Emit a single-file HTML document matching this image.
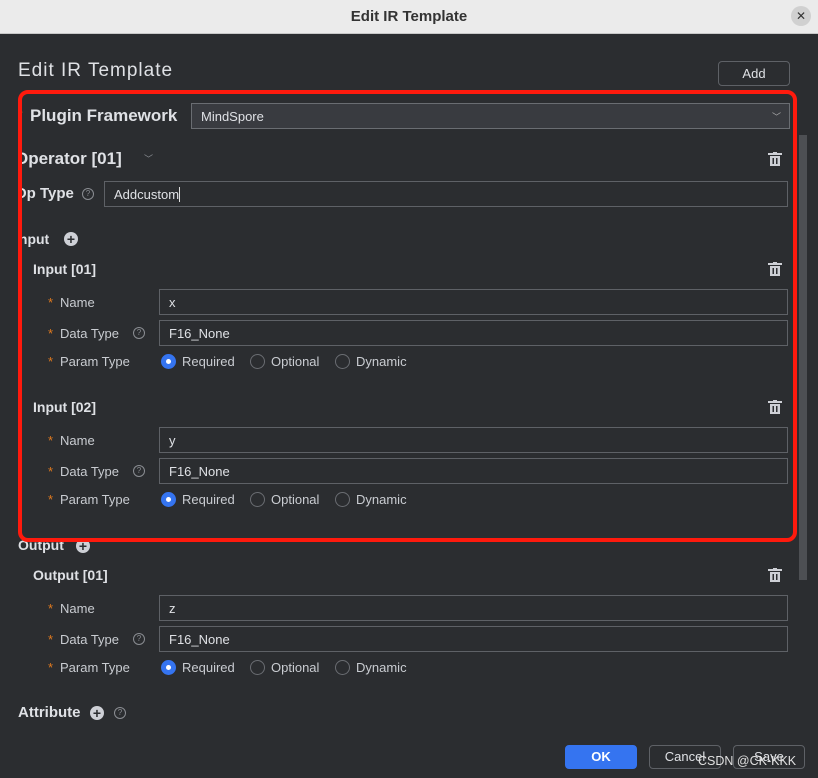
<!DOCTYPE html>
<html><head><style>
*{box-sizing:border-box;margin:0;padding:0}
body{width:818px;height:778px;background:#2b2d30;font-family:"Liberation Sans",sans-serif;color:#dfe1e5;position:relative;overflow:hidden}
.a{position:absolute;white-space:nowrap}
.tb{left:0;top:0;width:818px;height:34px;background:#ebebeb;border-bottom:1px solid #c8c8c8}
.box{position:absolute;border:1px solid #5e6166;background:#2b2d30;font-size:13px;padding-left:9px;display:flex;align-items:center;color:#dfe1e5}
.lbl{font-size:13px;color:#c9ccd1}
.st{color:#e07a1f;font-size:13px}
.h{font-weight:bold;font-size:14px}
.rad{position:absolute;width:15px;height:15px;border-radius:50%;border:1px solid #6a6d72}
.on{background:#3574f0;border-color:#3574f0}
.on::after{content:"";position:absolute;left:4px;top:4px;width:5px;height:5px;border-radius:50%;background:#fff}
.q{position:absolute;width:12px;height:12px;border:1px solid #8a8d92;border-radius:50%;font-size:8px;color:#8a8d92;text-align:center;line-height:10px}
.plus{position:absolute;width:14px;height:14px;border-radius:50%;background:#ced0d6;color:#2b2d30;font-size:14px;font-weight:bold;text-align:center;line-height:14px}
.btn{position:absolute;border:1px solid #5e6166;border-radius:4px;font-size:13px;text-align:center;color:#dfe1e5}
</style></head><body>
<div class="a tb"></div>
<div class="a" style="left:0;width:818px;top:8px;text-align:center;font-size:15px;font-weight:bold;color:#333">Edit IR Template</div>
<div class="a" style="left:791px;top:6px;width:20px;height:20px;border-radius:50%;background:#d0d0d0;color:#333;text-align:center;line-height:20px;font-size:12px">✕</div>

<div class="a" style="left:18px;top:60px;font-size:19px;letter-spacing:1px;color:#dfe1e5">Edit IR Template</div>
<div class="btn" style="left:718px;top:61px;width:72px;height:25px;line-height:23px">Add</div>

<div class="a" style="left:799px;top:135px;width:8px;height:445px;background:#4d4f53"></div>

<div class="a" style="left:20px;top:100px;width:778px;height:640px;overflow:hidden">
<div class="a" style="left:-2px;top:8px;font-size:12px;color:#e07a1f">*</div>
<div class="a" style="left:10px;top:6px;font-size:17px;font-weight:bold">Plugin Framework</div>
<div class="box" style="left:171px;top:3px;width:599px;height:26px;background:#393b40;border-color:#6a6d72">MindSpore<span style="position:absolute;right:8px;color:#aaa;font-size:9px">﹀</span></div>
<div class="a" style="left:-5px;top:49px;font-size:17px;font-weight:bold">Operator [01]</div>
<div class="a" style="left:124px;top:52px;font-size:9px;color:#8a8d92">﹀</div>
<div class="a" style="left:-5px;top:85px;font-size:15px;font-weight:bold">Op Type</div>
<div class="q" style="left:62px;top:88px">?</div>
<div class="box" style="left:84px;top:81px;width:684px;height:26px">Addcustom<span style="display:inline-block;width:1px;height:15px;background:#ddd"></span></div>
<div class="a" style="left:-5px;top:131px;font-size:14px;font-weight:bold">Input</div>
<div class="plus" style="left:44px;top:132px">+</div>
</div>

<svg class="a" style="left:768px;top:152px" width="14" height="15" viewBox="0 0 14 15"><rect x="0" y="1" width="14" height="2" fill="#ced0d6"/><rect x="5" y="0" width="4" height="2" fill="#ced0d6"/><rect x="2" y="4" width="10" height="10" fill="#ced0d6"/><rect x="4.5" y="6" width="1.5" height="6" fill="#2b2d30"/><rect x="8" y="6" width="1.5" height="6" fill="#2b2d30"/></svg>
<svg class="a" style="left:768px;top:262px" width="14" height="15" viewBox="0 0 14 15"><rect x="0" y="1" width="14" height="2" fill="#ced0d6"/><rect x="5" y="0" width="4" height="2" fill="#ced0d6"/><rect x="2" y="4" width="10" height="10" fill="#ced0d6"/><rect x="4.5" y="6" width="1.5" height="6" fill="#2b2d30"/><rect x="8" y="6" width="1.5" height="6" fill="#2b2d30"/></svg>
<svg class="a" style="left:768px;top:400px" width="14" height="15" viewBox="0 0 14 15"><rect x="0" y="1" width="14" height="2" fill="#ced0d6"/><rect x="5" y="0" width="4" height="2" fill="#ced0d6"/><rect x="2" y="4" width="10" height="10" fill="#ced0d6"/><rect x="4.5" y="6" width="1.5" height="6" fill="#2b2d30"/><rect x="8" y="6" width="1.5" height="6" fill="#2b2d30"/></svg>
<svg class="a" style="left:768px;top:568px" width="14" height="15" viewBox="0 0 14 15"><rect x="0" y="1" width="14" height="2" fill="#ced0d6"/><rect x="5" y="0" width="4" height="2" fill="#ced0d6"/><rect x="2" y="4" width="10" height="10" fill="#ced0d6"/><rect x="4.5" y="6" width="1.5" height="6" fill="#2b2d30"/><rect x="8" y="6" width="1.5" height="6" fill="#2b2d30"/></svg>

<div class="a h" style="left:33px;top:261px">Input [01]</div>
<div class="a st" style="left:48px;top:295px">*</div><div class="a lbl" style="left:60px;top:295px">Name</div>
<div class="box" style="left:159px;top:289px;width:629px;height:26px">x</div>
<div class="a st" style="left:48px;top:326px">*</div><div class="a lbl" style="left:60px;top:326px">Data Type</div><div class="q" style="left:133px;top:327px">?</div>
<div class="box" style="left:159px;top:320px;width:629px;height:26px">F16_None</div>
<div class="a st" style="left:48px;top:354px">*</div><div class="a lbl" style="left:60px;top:354px">Param Type</div>
<div class="rad on" style="left:161px;top:354px"></div><div class="a lbl" style="left:182px;top:354px">Required</div>
<div class="rad" style="left:250px;top:354px"></div><div class="a lbl" style="left:271px;top:354px">Optional</div>
<div class="rad" style="left:335px;top:354px"></div><div class="a lbl" style="left:356px;top:354px">Dynamic</div>

<div class="a h" style="left:33px;top:399px">Input [02]</div>
<div class="a st" style="left:48px;top:433px">*</div><div class="a lbl" style="left:60px;top:433px">Name</div>
<div class="box" style="left:159px;top:427px;width:629px;height:26px">y</div>
<div class="a st" style="left:48px;top:464px">*</div><div class="a lbl" style="left:60px;top:464px">Data Type</div><div class="q" style="left:133px;top:465px">?</div>
<div class="box" style="left:159px;top:458px;width:629px;height:26px">F16_None</div>
<div class="a st" style="left:48px;top:492px">*</div><div class="a lbl" style="left:60px;top:492px">Param Type</div>
<div class="rad on" style="left:161px;top:492px"></div><div class="a lbl" style="left:182px;top:492px">Required</div>
<div class="rad" style="left:250px;top:492px"></div><div class="a lbl" style="left:271px;top:492px">Optional</div>
<div class="rad" style="left:335px;top:492px"></div><div class="a lbl" style="left:356px;top:492px">Dynamic</div>

<div class="a h" style="left:18px;top:537px">Output</div>
<div class="plus" style="left:76px;top:539px">+</div>
<div class="a h" style="left:33px;top:567px">Output [01]</div>
<div class="a st" style="left:48px;top:601px">*</div><div class="a lbl" style="left:60px;top:601px">Name</div>
<div class="box" style="left:159px;top:595px;width:629px;height:26px">z</div>
<div class="a st" style="left:48px;top:632px">*</div><div class="a lbl" style="left:60px;top:632px">Data Type</div><div class="q" style="left:133px;top:633px">?</div>
<div class="box" style="left:159px;top:626px;width:629px;height:26px">F16_None</div>
<div class="a st" style="left:48px;top:660px">*</div><div class="a lbl" style="left:60px;top:660px">Param Type</div>
<div class="rad on" style="left:161px;top:660px"></div><div class="a lbl" style="left:182px;top:660px">Required</div>
<div class="rad" style="left:250px;top:660px"></div><div class="a lbl" style="left:271px;top:660px">Optional</div>
<div class="rad" style="left:335px;top:660px"></div><div class="a lbl" style="left:356px;top:660px">Dynamic</div>

<div class="a" style="left:18px;top:704px;font-size:15px;font-weight:bold">Attribute</div>
<div class="plus" style="left:90px;top:706px">+</div>
<div class="q" style="left:114px;top:707px">?</div>

<div class="a" style="left:18px;top:90px;width:779px;height:452px;border:4px solid #ff1a0d;border-radius:10px"></div>

<div class="btn" style="left:565px;top:745px;width:72px;height:24px;line-height:22px;background:#3574f0;border-color:#3574f0;color:#fff;font-weight:bold">OK</div>
<div class="btn" style="left:649px;top:745px;width:72px;height:24px;line-height:22px">Cancel</div>
<div class="btn" style="left:733px;top:745px;width:72px;height:24px;line-height:22px">Save</div>
<div class="a" style="left:698px;top:754px;font-size:12.5px;color:#e0e0e0">CSDN @CK-KKK</div>
</body></html>
